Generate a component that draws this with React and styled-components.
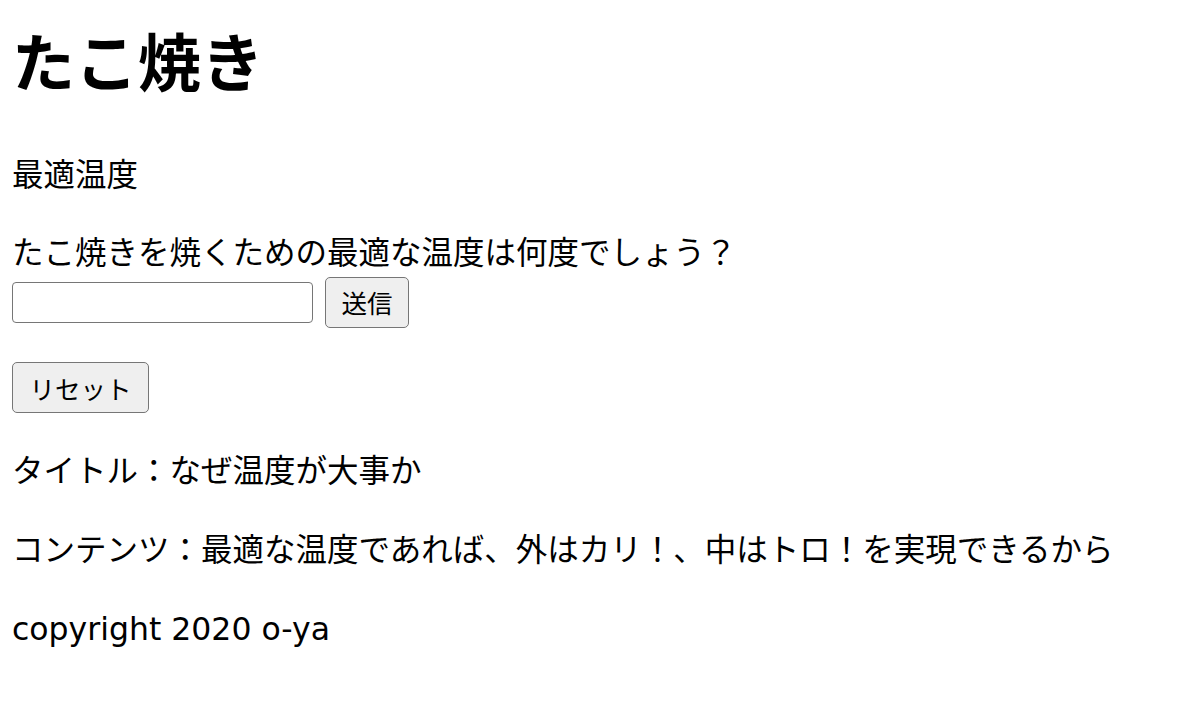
import React, { useState } from 'react';
import styled, { createGlobalStyle } from 'styled-components';

const GlobalStyle = createGlobalStyle`
  html, body {
    margin: 0;
    padding: 0;
    background: #fff;
  }
  body {
    padding: 12px;
    font-family: "Noto Sans CJK JP", "Noto Sans", sans-serif;
    font-size: 31.5px;
    line-height: 1.5;
    color: #000;
  }
`

const Title = styled.h1`
  margin: 0 0 42px;
  font-size: 63px;
  font-weight: 700;
  line-height: 1.5;
`

const Text = styled.p`
  margin: 0 0 31.5px;
`

const Question = styled.div`
  margin-bottom: 34px;
`

const FormRow = styled.form`
  display: flex;
  align-items: center;
  gap: 12px;
  height: 51px;
  margin-top: 2px;
`

const Input = styled.input`
  box-sizing: border-box;
  width: 301px;
  height: 41px;
  margin: 0;
  padding: 0 6px;
  border: 1.5px solid #767676;
  border-radius: 4px;
  background: #fff;
  font-size: 25px;
  font-family: inherit;
`

const Button = styled.button`
  box-sizing: border-box;
  height: 51px;
  margin: 0;
  padding: 0 ${props => (props.$wide ? 16.5 : 15.5)}px;
  border: 1.5px solid #767676;
  border-radius: 5px;
  background: #efefef;
  color: #000;
  font-family: "Noto Sans CJK JP", sans-serif;
  font-size: 25.5px;
  line-height: 1;
  cursor: pointer;
`

const ResetWrap = styled.div`
  margin-bottom: 32px;
`

const Footer = styled.footer`
  padding-top: 4px;
  font-family: "DejaVu Sans", "Noto Sans CJK JP", sans-serif;
`

export default function App() {
  const [answer, setAnswer] = useState('');

  return (
    <>
      <GlobalStyle />
      <Title>たこ焼き</Title>
      <Text>最適温度</Text>
      <Question>
        <div>たこ焼きを焼くための最適な温度は何度でしょう？</div>
        <FormRow onSubmit={e => e.preventDefault()}>
          <Input value={answer} onChange={e => setAnswer(e.target.value)} />
          <Button type="submit">送信</Button>
        </FormRow>
      </Question>
      <ResetWrap>
        <Button $wide onClick={() => setAnswer('')}>リセット</Button>
      </ResetWrap>
      <Text>タイトル：なぜ温度が大事か</Text>
      <Text>コンテンツ：最適な温度であれば、外はカリ！、中はトロ！を実現できるから</Text>
      <Footer>copyright 2020 o-ya</Footer>
    </>
  )
}
